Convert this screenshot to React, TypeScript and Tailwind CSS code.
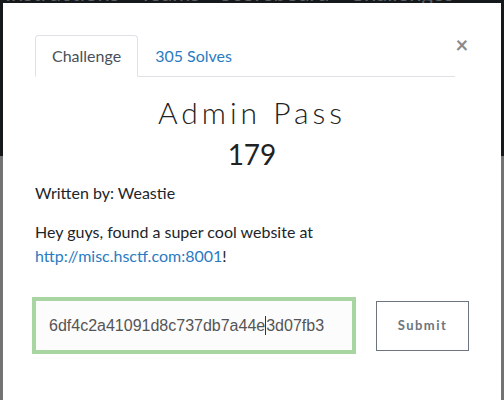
export default function App() {
  return (
    <div className="relative w-[504px] h-[400px] overflow-hidden bg-[#737373] font-['Lato','Liberation_Sans',sans-serif]">
      {/* page behind the backdrop */}
      <div className="h-[156px] bg-[#16191c]">
        <div className="h-[3px] overflow-hidden">
          <div className="flex gap-[20px] pl-[5px] -mt-[17px] text-[22px] leading-[20px] text-[#5c5f62]">
            <span>Instructions</span>
            <span>Teams</span>
            <span>Scoreboard</span>
            <span>Challenges</span>
          </div>
        </div>
      </div>

      {/* modal */}
      <div className="absolute left-[3px] top-[3px] w-[498px] h-[420px] bg-white px-[32px] pt-[32px] text-[#212529]">
        <div className="flex items-start">
          <div className="flex w-[420px] border-b border-[#dee2e6]">
            <div className="-mb-px h-[42px] flex items-center px-4 border border-[#dee2e6] border-b-white rounded-t bg-white text-[16px] text-[#495057]">
              Challenge
            </div>
            <div className="-mb-px h-[42px] flex items-center px-4 border border-transparent text-[16px] text-[#2a7bc1]">
              305 Solves
            </div>
          </div>
          <div className="flex-1 text-center text-[22px] leading-[20px] font-bold text-[#8a8a8a]">×</div>
        </div>

        <h1 className="mt-[17px] text-center text-[30px] leading-[36px] font-light tracking-[4px] text-[#222]">
          Admin Pass
        </h1>
        <div className="mt-[7px] text-center text-[28px] leading-[34px] text-[#222]">179</div>

        <p className="mt-[10px] text-[16px] leading-[24px]">Written by: Weastie</p>
        <p className="mt-[15px] text-[16px] leading-[24px]">
          Hey guys, found a super cool website at
          <br />
          <a className="text-[#2a7bc1]">http://misc.hsctf.com:8001</a>!
        </p>

        <div className="mt-[32px] flex items-center gap-[23px]">
          <div className="w-[318px] h-[51px] flex items-center px-[13px] border border-[#a8d5a2] ring-[3px] ring-[#a8d5a2] bg-[#fcfcfc] font-['Liberation_Sans',sans-serif] text-[16px] text-[#555]">
            <span>6df4c2a41091d8c737db7a44e</span>
            <span className="w-px h-[19px] bg-[#333]"></span>
            <span>3d07fb3</span>
          </div>
          <button className="w-[93px] h-[50px] border border-[#6c757d] text-[13px] font-bold tracking-[1.5px] text-[#6c757d]">
            Submit
          </button>
        </div>
      </div>
    </div>
  );
}
